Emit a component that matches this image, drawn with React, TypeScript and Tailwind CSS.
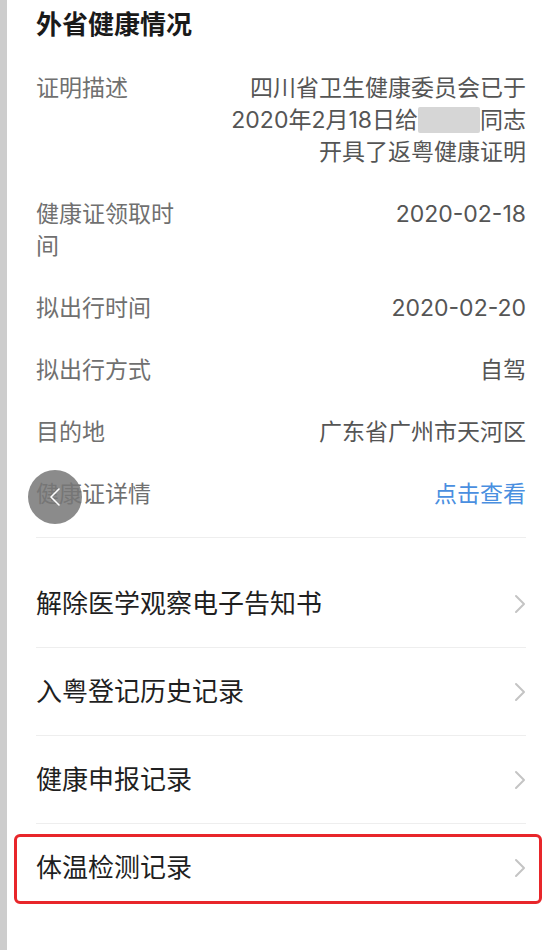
import React from 'react';

const infoRows: { label: string; value: React.ReactNode; blue?: boolean }[] = [
  {
    label: '证明描述',
    value: (
      <>
        <span className="block">四川省卫生健康委员会已于</span>
        <span className="block">
          2020年2月18日给
          <span className="inline-block w-[62px] h-[26px] align-[-5px] bg-[#d6d6d6] rounded-[2px]"></span>
          同志
        </span>
        <span className="block">开具了返粤健康证明</span>
      </>
    ),
  },
  { label: '健康证领取时间', value: '2020-02-18' },
  { label: '拟出行时间', value: '2020-02-20' },
  { label: '拟出行方式', value: '自驾' },
  { label: '目的地', value: '广东省广州市天河区' },
  { label: '健康证详情', value: '点击查看', blue: true },
];

const menuItems = ['解除医学观察电子告知书', '入粤登记历史记录', '健康申报记录', '体温检测记录'];

function Chevron() {
  return (
    <svg width="12" height="20" viewBox="0 0 12 20" fill="none" className="shrink-0">
      <path d="M2 2 L10 10 L2 18" stroke="#c4c4c4" strokeWidth="2" strokeLinecap="round" strokeLinejoin="round" />
    </svg>
  );
}

export default function App() {
  return (
    <div
      className="flex min-h-[950px] bg-white"
      style={{ fontFamily: 'Inter, "Noto Sans CJK SC", "Noto Sans", sans-serif' }}
    >
      <div className="w-[7px] shrink-0 bg-[#cdcdcd]" />
      <div className="relative flex-1 pl-[29px] pr-[28px]">
        <h1 className="pt-2 mb-[15px] text-[26px] leading-[34px] font-bold text-[#1a1a1a]">外省健康情况</h1>

        {/* info rows */}
        <div className="pb-3 border-b border-[#eeeeee]">
          {infoRows.map((row) => (
            <div key={row.label} className="flex justify-between py-[15px] text-[23px] leading-[32px]">
              <div className="w-[150px] shrink-0 text-[#707070]">{row.label}</div>
              <div className={`text-right ${row.blue ? 'text-[#4a8fe0]' : 'text-[#555555]'}`}>{row.value}</div>
            </div>
          ))}
        </div>

        {/* menu */}
        <div className="mt-[22px]">
          {menuItems.map((item, i) => (
            <div
              key={item}
              className={`relative flex h-[88px] items-center justify-between ${
                i < menuItems.length - 1 ? 'border-b border-[#eeeeee]' : ''
              }`}
            >
              <span className="text-[26px] leading-[34px] text-[#1f1f1f]">{item}</span>
              <Chevron />
              {i === menuItems.length - 1 && (
                <div className="absolute -left-[22px] -right-[16px] top-[10px] bottom-[8px] border-[3px] border-[#e8262a] rounded-[6px]" />
              )}
            </div>
          ))}
        </div>

        {/* floating back button */}
        <div className="absolute left-[21px] top-[470px] flex h-[54px] w-[54px] items-center justify-center rounded-full bg-[#777777]/85">
          <svg width="12" height="20" viewBox="0 0 12 20" fill="none">
            <path d="M10 2 L2 10 L10 18" stroke="#ffffff" strokeWidth="1.6" strokeLinecap="round" strokeLinejoin="round" />
          </svg>
        </div>
      </div>
    </div>
  );
}
